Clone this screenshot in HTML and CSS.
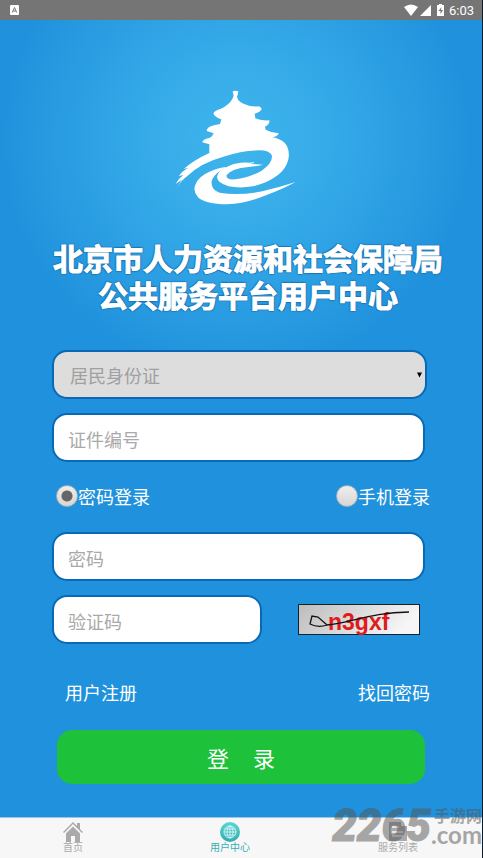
FILE: index.html
```html
<!DOCTYPE html>
<html lang="zh-CN">
<head>
  <meta charset="UTF-8">
  <meta name="viewport" content="width=device-width, initial-scale=1.0">
  <title>用户中心</title>
  <link rel="stylesheet" href="styles.css">
</head>
<body>
  <div class="status-bar">
    <svg class="app-mark" viewBox="0 0 10 10" width="10" height="10">
      <rect width="9" height="10" rx="1" fill="#fff"/>
      <path d="M2.3 7.5 4.5 2.5 6.7 7.5M3.2 6H5.8" fill="none" stroke="#757575" stroke-width="1"/>
    </svg>
    <div class="status-right">
      <svg viewBox="0 0 41 14" width="41" height="14">
        <path d="M0 4Q7 -1 14 4L7 13Z" fill="#fff"/>
        <path d="M27 2V13H16Z" fill="#fff"/>
        <path d="M33 2h2V1h3v1h2v11h-7z" fill="#fff"/>
        <path d="M37.500 4 34.500 8h2v3l2.500-4h-2z" fill="#757575"/>
      </svg>
      <span>6:03</span>
    </div>
  </div>

  <main class="page">
    <svg class="logo" viewBox="0 0 450 405" width="150" height="135">
      <path fill="#fff" d="M221 34Q229 30 238 34L236 45L234 49Q235 62 250 70Q274 82 299 79Q307 81 308 87Q304 96 287 101L289 115Q304 123 331 121Q333 132 318 140L320 149Q336 158 359 160Q357 169 340 172Q364 176 378 190Q394 210 388 238Q382 266 356 286Q325 309 286 318Q243 326 209 319Q175 309 174 291Q178 269 208 259Q234 246 268 248L280 252L312 254Q293 259 268 261Q218 266 203 285Q200 300 228 298Q271 293 308 272Q344 247 338 225Q331 211 301 211Q251 211 193 230Q127 248 86 287Q67 300 53 324L68 299L50 312Q57 297 73 285L60 288Q68 274 88 263L74 267Q105 240 151 219V193L130 187Q130 178 151 174L159 169L164 160L143 153Q142 142 165 136L183 132L187 118Q168 112 163 100Q167 91 186 86Q211 74 220 57L224 48Z"/>
      <path fill="#fff" d="M203 261L186 271Q163 286 158 303Q155 329 182 338Q240 347 310 334Q360 322 410 306Q373 326 321 346Q263 370 204 373Q140 373 117 352Q101 334 109 314Q119 289 150 276Q178 263 203 261Z"/>
      <path fill="none" stroke="#fff" stroke-width="3" d="M207 267Q235 252 285 248"/>
    </svg>

    <h1 class="title">北京市人力资源和社会保障局<br>公共服务平台用户中心</h1>

    <form class="login">
      <select class="field id-type" aria-label="证件类型" disabled>
        <option>居民身份证</option>
      </select>
      <input class="field" type="text" placeholder="证件编号" aria-label="证件编号">

      <div class="row modes">
        <label><input type="radio" name="mode" checked>密码登录</label>
        <label><input type="radio" name="mode">手机登录</label>
      </div>

      <input class="field" type="password" placeholder="密码" aria-label="密码">

      <div class="row captcha-row">
        <input class="field code" type="text" placeholder="验证码" aria-label="验证码">
        <svg class="captcha" viewBox="0 0 122 31" width="122" height="31">
          <defs>
            <linearGradient id="paper" x1="0" y1="0" x2="1" y2="0.25">
              <stop offset="0" stop-color="#bcbcbc"/>
              <stop offset="1" stop-color="#f6f6f6"/>
            </linearGradient>
          </defs>
          <rect x="0.5" y="0.5" width="121" height="30" fill="url(#paper)" stroke="#14202a"/>
          <text class="captcha-text" x="30" y="26">n3gxf</text>
          <path d="M29 21 20 13 14 12 12 20Q20 24 29 21C52 19 74 8 111 8" fill="none" stroke="#111" stroke-width="1.300"/>
        </svg>
      </div>

      <div class="row links">
        <a href="#">用户注册</a>
        <a href="#">找回密码</a>
      </div>

      <button class="submit" type="button"><span>登</span><span>录</span></button>
    </form>
  </main>

  <nav class="tabs">
    <a class="tab" href="#">
      <svg viewBox="0 0 20 20" width="20" height="20">
        <path d="M0 10 10 0 14 4V1h3v6l3 3-1 1-9-9-9 9z" fill="#aaa"/>
        <path d="M3 11.500 10 4.500 17 11.500V20H12V14H8V20H3Z" fill="#aaa"/>
      </svg>
      <span>首页</span>
    </a>
    <a class="tab active" href="#">
      <svg viewBox="0 0 20 20" width="20" height="20">
        <defs>
          <linearGradient id="disc" x1="0" y1="0" x2="0" y2="1">
            <stop offset="0" stop-color="#5cd6d2"/>
            <stop offset="1" stop-color="#36a9ae"/>
          </linearGradient>
        </defs>
        <circle cx="10" cy="10" r="10" fill="url(#disc)"/>
        <g fill="none" stroke="#e2ffff" stroke-width="0.800">
          <circle cx="10" cy="10" r="6"/>
          <ellipse cx="10" cy="10" rx="3" ry="6"/>
          <path d="M10 4V16M4 10H16M5 7H15M5 13H15"/>
        </g>
      </svg>
      <span>用户中心</span>
    </a>
    <a class="tab" href="#">
      <svg viewBox="0 0 20 20" width="20" height="20">
        <path d="M1 0H13V4H19V19H1Z" fill="#aaa"/>
        <path d="M4 5H11M4 10H15M4 14H15" stroke="#f7f7f7" stroke-width="1.500"/>
      </svg>
      <span>服务列表</span>
    </a>
    <div class="watermark">
      <span class="mark-number">2265</span>
      <span class="mark-side"><span>手游网</span><b>.com</b></span>
    </div>
  </nav>
</body>
</html>
```
FILE: styles.css
```css
* {
  box-sizing: border-box;
}

body {
  margin: 0;
  min-height: 100vh;
  display: flex;
  flex-direction: column;
  border-right: 1px solid #0c1c28;
  background: #2092dd;
  font-family: Roboto, "Noto Sans CJK SC", sans-serif;
  color: #fff;
}

a {
  color: inherit;
  text-decoration: none;
}

.status-bar {
  height: 20px;
  padding: 0 8px 0 10px;
  display: flex;
  align-items: center;
  justify-content: space-between;
  background: #757575;
  font-size: 13px;
}

.status-right {
  display: flex;
  align-items: center;
  gap: 4px;
}

.page {
  flex: 1;
  padding-top: 60px;
  background: radial-gradient(circle 235px at 49% 120px, #3fb5ec, #35aae8 40%, #2092dd);
}

.logo {
  display: block;
  margin-left: 33%;
}

.title {
  margin: 26px 0 0 14px;
  text-align: center;
  font-size: 30px;
  line-height: 37px;
  font-weight: 700;
  white-space: nowrap;
  -webkit-text-stroke: 1px #fff;
  text-shadow: 1px 1px 1px #1a6fae, -1px -1px 1px #1a6fae, 1px -1px 1px #1a6fae, -1px 1px 1px #1a6fae;
}

.login {
  margin-top: 35px;
  padding: 0 52px 33px;
  display: flex;
  flex-direction: column;
}

.row {
  display: flex;
  align-items: center;
  justify-content: space-between;
}

.field {
  height: 49px;
  margin: 0 5px 14px 0;
  padding: 2px 14px 0;
  border: 2px solid #0969b5;
  border-radius: 15px;
  background: #fff;
  font: 18px/24px "Noto Sans CJK SC", sans-serif;
}

.field::placeholder {
  color: #a9a9a9;
  opacity: 1;
}

.id-type {
  margin-right: 3px;
  padding: 0 16px;
  appearance: none;
  color: #a0a0a0;
  opacity: 1;
  background: url("data:image/svg+xml,%3Csvg xmlns='http://www.w3.org/2000/svg' viewBox='0 0 6 6'%3E%3Cpath d='M0 0H6L3 6Z'/%3E%3C/svg%3E") right 3px center / 5px 6px no-repeat #ddd;
}

.modes {
  height: 24px;
  margin: 8px 0 24px;
  padding-left: 4px;
  font-size: 18px;
}

.modes label {
  display: flex;
  align-items: center;
}

.modes input {
  appearance: none;
  width: 22px;
  height: 22px;
  margin: 0;
  border: 1px solid #a5adb3;
  border-radius: 50%;
  background: linear-gradient(#eee, #d6d6d6);
}

.modes input:checked {
  background: radial-gradient(circle, #666 5px, transparent 6px), linear-gradient(#eee, #d6d6d6);
}

.captcha-row .code {
  width: 210px;
  min-width: 0;
}

.captcha {
  margin: 0 10px 14px 0;
}

.captcha-text {
  font: 700 23px "Liberation Sans", sans-serif;
  fill: #e11b1b;
}

.links {
  height: 24px;
  margin-top: 22px;
  padding-left: 13px;
  font-size: 18px;
}

.submit {
  height: 54px;
  margin: 26px 5px 0;
  border: 0;
  border-radius: 15px;
  display: flex;
  align-items: center;
  justify-content: center;
  gap: 24px;
  background: #1ec13a;
  color: #fff;
  font: 22px/30px "Noto Sans CJK SC", sans-serif;
}

.tabs {
  position: relative;
  display: grid;
  grid-template-columns: 146fr 168fr 168fr;
  height: 41px;
  padding-top: 4px;
  border-top: 1px solid #9cc5df;
  background: #f7f7f7;
}

.tab {
  display: flex;
  flex-direction: column;
  align-items: center;
  font-size: 10px;
  line-height: 12px;
  color: #aaa;
}

.active {
  color: #3aaeb2;
}

/* site mark lying over the corner of the tab bar */
.watermark {
  position: absolute;
  right: 0;
  bottom: 13px;
  display: flex;
  align-items: flex-end;
  color: #555;
  opacity: 0.5;
  pointer-events: none;
}

.mark-number {
  font: italic 900 44px/38px Roboto, sans-serif;
  -webkit-text-stroke: 1px #555;
}

.mark-side {
  display: flex;
  flex-direction: column;
  align-items: flex-end;
  font-size: 16px;
  line-height: 16px;
  font-weight: 700;
}

.mark-side b {
  font: 700 24px/20px Lato, sans-serif;
}
```
